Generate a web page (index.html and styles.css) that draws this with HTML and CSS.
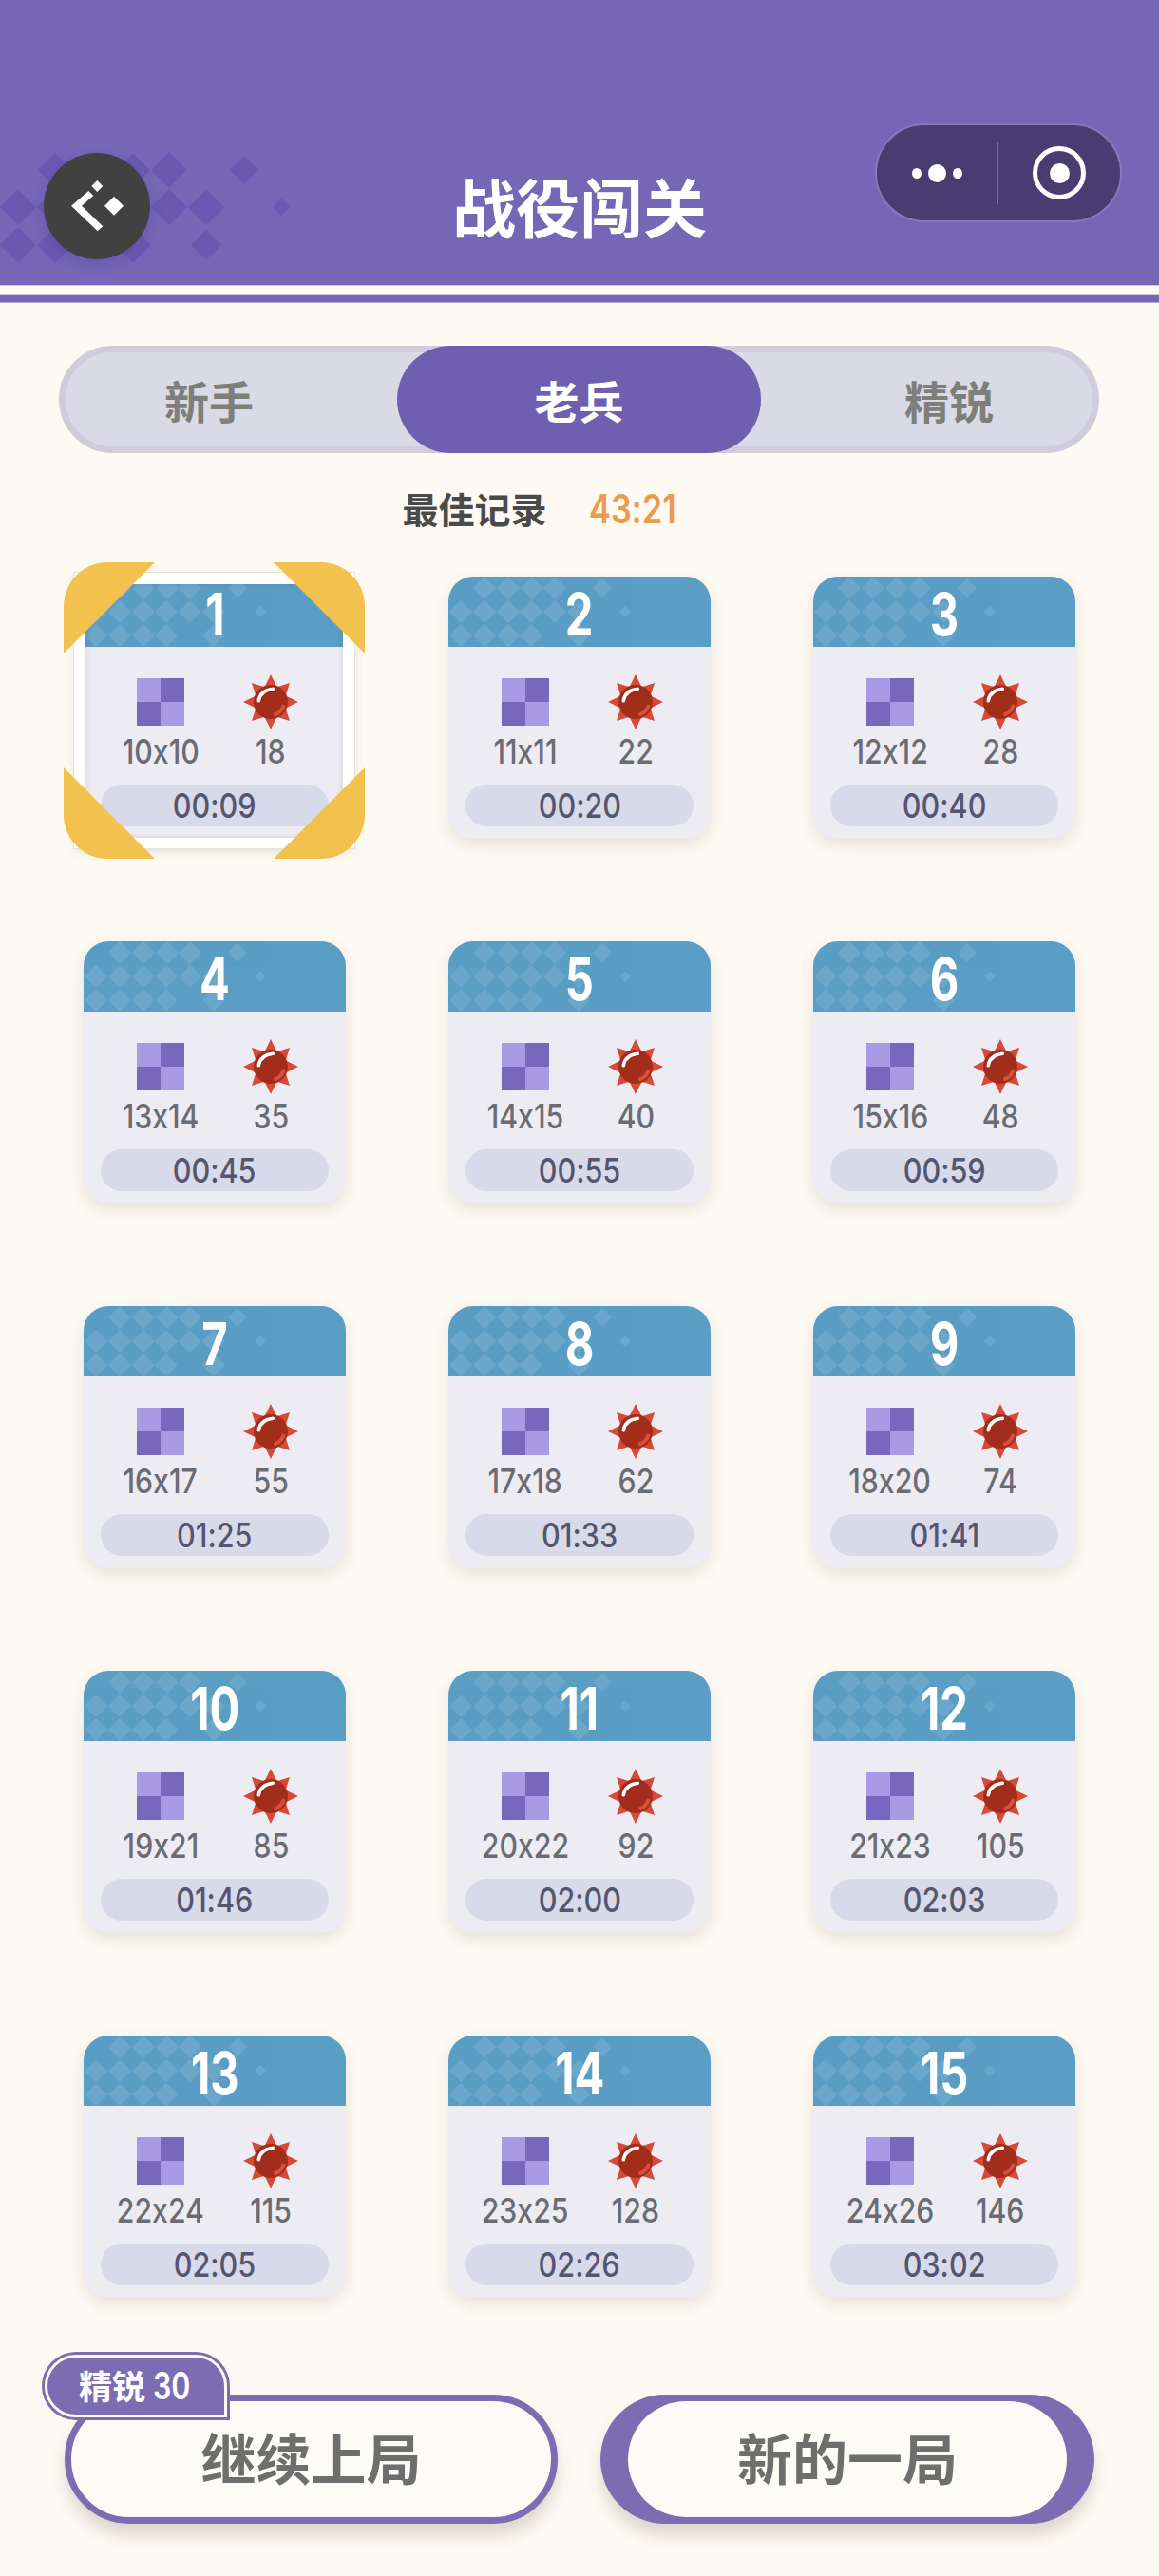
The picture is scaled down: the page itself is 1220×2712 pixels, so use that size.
FILE: index.html
```html
<!DOCTYPE html>
<html lang="zh-CN">
<head>
<meta charset="utf-8">
<title>战役闯关</title>
<link rel="stylesheet" href="styles.css">
</head>
<body>
<svg class="defs" width="0" height="0" aria-hidden="true">
  <defs>
    <symbol id="board" viewBox="0 0 50 50">
      <rect width="25" height="25" fill="#a99ae6"/><rect x="25" width="25" height="25" fill="#7767bd"/>
      <rect y="25" width="25" height="25" fill="#7767bd"/><rect x="25" y="25" width="25" height="25" fill="#a99ae6"/>
    </symbol>
    <symbol id="mine" viewBox="0 0 58 58">
      <polygon fill="#d64a38" points="29,0 35.5,13.3 49,9 44.7,22.5 58,29 44.7,35.5 49,49 35.5,44.7 29,58 22.5,44.7 9,49 13.3,35.5 0,29 13.3,22.5 9,9 22.5,13.3"/>
      <circle cx="29" cy="29" r="18" fill="#a32d1b"/>
      <path d="M16.3 27.7Q18 17 31.3 15.3" fill="none" stroke="#fff" stroke-width="3.6" stroke-linecap="round"/>
      <path d="M34 42Q39.500 40 42.300 33.700" fill="none" stroke="#d9503a" stroke-width="4" stroke-linecap="round"/>
    </symbol>
    <symbol id="deco" viewBox="0 0 276 74">
      <g fill="#fff" opacity=".1">
        <path d="M38 0l12 12-12 12-12-12zM63 0l12 12-12 12-12-12zM88 0l12 12-12 12-12-12zM112 0l12 12-12 12-12-12zM162 2l10 10-10 10-10-10z"/>
        <path d="M13 25l12 12-12 12L1 37zM38 25l12 12-12 12-12-12zM63 25l12 12-12 12-12-12zM87 25l12 12-12 12-12-12zM112 25l12 12-12 12-12-12zM137 25l12 12-12 12-12-12zM186 31l6 6-6 6-6-6z"/>
        <path d="M13 50l12 12-12 12L1 62zM38 50l12 12-12 12-12-12zM63 50l12 12-12 12-12-12zM87 50l12 12-12 12-12-12zM137 50l12 12-12 12-12-12z"/>
      </g>
    </symbol>
  </defs>
</svg>
<header class="top">
  <svg class="top-deco" viewBox="0 0 310 120" aria-hidden="true">
    <g fill="#6a59b1">
      <path d="M58 0l18 18-18 18-18-18zM140 0l18 18-18 18-18-18zM178 -1l19 19-19 19-19-19zM257 3l15 15-15 15-15-15z"/>
      <path d="M19 38l19 19-19 19L0 57zM58 38l19 19-19 19-19-19zM178 38l19 19-19 19-19-19zM217 38l19 19-19 19-19-19zM296 48l9 9-9 9-9-9z"/>
      <path d="M19 78l19 19-19 19L0 97zM58 78l19 19-19 19-19-19zM140 78l19 19-19 19-19-19zM217 81l16 16-16 16-16-16z"/>
    </g>
  </svg>
  <button class="back" aria-label="返回">
    <svg viewBox="0 0 112 112" width="112" height="112">
      <path fill="#fff" d="M29 55.700L47.300 40 52.300 45 40 55.700 62.300 77.300 56.700 82.300z"/>
      <path fill="#fff" d="M56.300 29l6 6-6 6-6-6zM74 45.700l10 10-10 10-10-10z"/>
    </svg>
  </button>
  <h1 class="top-title">战役闯关</h1>
  <div class="capsule">
    <div class="capsule-more"><i></i><b></b><i></i></div>
    <div class="capsule-rule"></div>
    <div class="capsule-close"><span></span></div>
  </div>
</header>
<div class="stripe"></div>
<main class="page">
  <nav class="tabs">
    <div class="tab tab-first">新手</div>
    <div class="tab tab-on">老兵</div>
    <div class="tab tab-last">精锐</div>
  </nav>
  <p class="best"><span class="best-label">最佳记录</span><span class="best-time">43:21</span></p>
  <section class="grid">
    <article class="card card-on">
      <div class="card-head"><svg class="card-deco"><use href="#deco"/></svg><span class="card-no">1</span></div>
      <div class="card-stats"><div class="stat stat-board"><svg class="stat-icon"><use href="#board"/></svg><span class="stat-val">10x10</span></div><div class="stat stat-mine"><svg class="stat-icon"><use href="#mine"/></svg><span class="stat-val">18</span></div></div>
      <div class="card-time"><span>00:09</span></div>
      <i class="card-frame"></i>
      <i class="corner corner-tl"></i><i class="corner corner-tr"></i><i class="corner corner-bl"></i><i class="corner corner-br"></i>
    </article>
    <article class="card">
      <div class="card-head"><svg class="card-deco"><use href="#deco"/></svg><span class="card-no">2</span></div>
      <div class="card-stats"><div class="stat stat-board"><svg class="stat-icon"><use href="#board"/></svg><span class="stat-val">11x11</span></div><div class="stat stat-mine"><svg class="stat-icon"><use href="#mine"/></svg><span class="stat-val">22</span></div></div>
      <div class="card-time"><span>00:20</span></div>
    </article>
    <article class="card">
      <div class="card-head"><svg class="card-deco"><use href="#deco"/></svg><span class="card-no">3</span></div>
      <div class="card-stats"><div class="stat stat-board"><svg class="stat-icon"><use href="#board"/></svg><span class="stat-val">12x12</span></div><div class="stat stat-mine"><svg class="stat-icon"><use href="#mine"/></svg><span class="stat-val">28</span></div></div>
      <div class="card-time"><span>00:40</span></div>
    </article>
    <article class="card">
      <div class="card-head"><svg class="card-deco"><use href="#deco"/></svg><span class="card-no">4</span></div>
      <div class="card-stats"><div class="stat stat-board"><svg class="stat-icon"><use href="#board"/></svg><span class="stat-val">13x14</span></div><div class="stat stat-mine"><svg class="stat-icon"><use href="#mine"/></svg><span class="stat-val">35</span></div></div>
      <div class="card-time"><span>00:45</span></div>
    </article>
    <article class="card">
      <div class="card-head"><svg class="card-deco"><use href="#deco"/></svg><span class="card-no">5</span></div>
      <div class="card-stats"><div class="stat stat-board"><svg class="stat-icon"><use href="#board"/></svg><span class="stat-val">14x15</span></div><div class="stat stat-mine"><svg class="stat-icon"><use href="#mine"/></svg><span class="stat-val">40</span></div></div>
      <div class="card-time"><span>00:55</span></div>
    </article>
    <article class="card">
      <div class="card-head"><svg class="card-deco"><use href="#deco"/></svg><span class="card-no">6</span></div>
      <div class="card-stats"><div class="stat stat-board"><svg class="stat-icon"><use href="#board"/></svg><span class="stat-val">15x16</span></div><div class="stat stat-mine"><svg class="stat-icon"><use href="#mine"/></svg><span class="stat-val">48</span></div></div>
      <div class="card-time"><span>00:59</span></div>
    </article>
    <article class="card">
      <div class="card-head"><svg class="card-deco"><use href="#deco"/></svg><span class="card-no">7</span></div>
      <div class="card-stats"><div class="stat stat-board"><svg class="stat-icon"><use href="#board"/></svg><span class="stat-val">16x17</span></div><div class="stat stat-mine"><svg class="stat-icon"><use href="#mine"/></svg><span class="stat-val">55</span></div></div>
      <div class="card-time"><span>01:25</span></div>
    </article>
    <article class="card">
      <div class="card-head"><svg class="card-deco"><use href="#deco"/></svg><span class="card-no">8</span></div>
      <div class="card-stats"><div class="stat stat-board"><svg class="stat-icon"><use href="#board"/></svg><span class="stat-val">17x18</span></div><div class="stat stat-mine"><svg class="stat-icon"><use href="#mine"/></svg><span class="stat-val">62</span></div></div>
      <div class="card-time"><span>01:33</span></div>
    </article>
    <article class="card">
      <div class="card-head"><svg class="card-deco"><use href="#deco"/></svg><span class="card-no">9</span></div>
      <div class="card-stats"><div class="stat stat-board"><svg class="stat-icon"><use href="#board"/></svg><span class="stat-val">18x20</span></div><div class="stat stat-mine"><svg class="stat-icon"><use href="#mine"/></svg><span class="stat-val">74</span></div></div>
      <div class="card-time"><span>01:41</span></div>
    </article>
    <article class="card">
      <div class="card-head"><svg class="card-deco"><use href="#deco"/></svg><span class="card-no">10</span></div>
      <div class="card-stats"><div class="stat stat-board"><svg class="stat-icon"><use href="#board"/></svg><span class="stat-val">19x21</span></div><div class="stat stat-mine"><svg class="stat-icon"><use href="#mine"/></svg><span class="stat-val">85</span></div></div>
      <div class="card-time"><span>01:46</span></div>
    </article>
    <article class="card">
      <div class="card-head"><svg class="card-deco"><use href="#deco"/></svg><span class="card-no">11</span></div>
      <div class="card-stats"><div class="stat stat-board"><svg class="stat-icon"><use href="#board"/></svg><span class="stat-val">20x22</span></div><div class="stat stat-mine"><svg class="stat-icon"><use href="#mine"/></svg><span class="stat-val">92</span></div></div>
      <div class="card-time"><span>02:00</span></div>
    </article>
    <article class="card">
      <div class="card-head"><svg class="card-deco"><use href="#deco"/></svg><span class="card-no">12</span></div>
      <div class="card-stats"><div class="stat stat-board"><svg class="stat-icon"><use href="#board"/></svg><span class="stat-val">21x23</span></div><div class="stat stat-mine"><svg class="stat-icon"><use href="#mine"/></svg><span class="stat-val">105</span></div></div>
      <div class="card-time"><span>02:03</span></div>
    </article>
    <article class="card">
      <div class="card-head"><svg class="card-deco"><use href="#deco"/></svg><span class="card-no">13</span></div>
      <div class="card-stats"><div class="stat stat-board"><svg class="stat-icon"><use href="#board"/></svg><span class="stat-val">22x24</span></div><div class="stat stat-mine"><svg class="stat-icon"><use href="#mine"/></svg><span class="stat-val">115</span></div></div>
      <div class="card-time"><span>02:05</span></div>
    </article>
    <article class="card">
      <div class="card-head"><svg class="card-deco"><use href="#deco"/></svg><span class="card-no">14</span></div>
      <div class="card-stats"><div class="stat stat-board"><svg class="stat-icon"><use href="#board"/></svg><span class="stat-val">23x25</span></div><div class="stat stat-mine"><svg class="stat-icon"><use href="#mine"/></svg><span class="stat-val">128</span></div></div>
      <div class="card-time"><span>02:26</span></div>
    </article>
    <article class="card">
      <div class="card-head"><svg class="card-deco"><use href="#deco"/></svg><span class="card-no">15</span></div>
      <div class="card-stats"><div class="stat stat-board"><svg class="stat-icon"><use href="#board"/></svg><span class="stat-val">24x26</span></div><div class="stat stat-mine"><svg class="stat-icon"><use href="#mine"/></svg><span class="stat-val">146</span></div></div>
      <div class="card-time"><span>03:02</span></div>
    </article>
  </section>
  <footer class="actions">
    <button class="btn btn-resume">
      <span class="flag">精锐 <span class="flag-num">30</span></span>
      继续上局
    </button>
    <button class="btn btn-new"><span class="btn-new-in">新的一局</span></button>
  </footer>
</main>
</body>
</html>
```
FILE: styles.css
```css
* { box-sizing: border-box; }
html, body { margin: 0; padding: 0; }
body {
  width: 1220px;
  height: 2712px;
  background: #fdfaf3;
  font-family: "Noto Sans CJK SC", "Inter", sans-serif;
  font-feature-settings: "calt" 0;
  overflow: hidden;
}
.defs { position: absolute; }

/* header */
.top {
  position: relative;
  height: 300px;
  background: #7566b6;
  display: flex;
  align-items: flex-end;
  justify-content: center;
}
.top-deco { position: absolute; left: 0; top: 161px; width: 310px; height: 120px; overflow: visible; }
.back {
  position: absolute; left: 46px; top: 161px;
  width: 112px; height: 112px;
  border: 0; border-radius: 50%;
  background: #414141;
  padding: 0;
  box-shadow: 0 6px 14px rgba(70, 55, 140, .25);
}
.back svg { display: block; }
.top-title {
  margin: 0 0 48px;
  color: #fff;
  font-size: 67px;
  line-height: 72px;
  font-weight: 700;
}
.capsule {
  position: absolute; left: 921px; top: 130px;
  width: 260px; height: 104px;
  border-radius: 52px;
  background: #483c70;
  border: 2px solid #8778bb;
  display: flex; align-items: center;
}
.capsule-more { width: 126px; display: flex; justify-content: center; align-items: center; gap: 7px; }
.capsule-more i { width: 10px; height: 11px; border-radius: 50%; background: #fff; }
.capsule-more b { width: 19px; height: 19px; border-radius: 50%; background: #fff; }
.capsule-rule { width: 2px; height: 66px; background: #7b6fa8; }
.capsule-close { flex: 1; display: flex; justify-content: center; }
.capsule-close span {
  width: 56px; height: 56px; border-radius: 50%;
  border: 5px solid #fff;
  display: flex; align-items: center; justify-content: center;
}
.capsule-close span::after { content: ""; width: 21px; height: 21px; border-radius: 50%; background: #fff; }
.stripe {
  height: 19px;
  background: linear-gradient(#fdfaf3 0 9px, #cfc7e3 9px 10px, #7566b6 10px);
  border-bottom: 1px solid #b5a9d4;
  border-top: 1px solid #cfc7e3;
}

/* tabs + best */
.page { padding: 45px 63px 0 62px; }
.tabs {
  display: flex;
  height: 113px;
  border-radius: 57px;
  border: 7px solid #cfcddc;
  background: #dadae7;
}
.tab {
  color: #7e7e7a;
  font-size: 47px;
  font-weight: 700;
  line-height: 99px;
  text-align: center;
}
.tab-first { flex: 0 0 349px; padding-right: 47px; }
.tab-last { flex: 0 0 349px; padding-left: 47px; }
.tab-on {
  flex: 0 0 383px;
  background: #6e5fb0;
  color: #fff;
  border-radius: 57px;
  height: 113px;
  margin-top: -7px;
  line-height: 113px;
}
.best {
  margin: 34px 0 0;
  display: flex;
  justify-content: center;
  gap: 44px;
  height: 48px;
  line-height: 48px;
  font-size: 38px;
  font-weight: 700;
  padding-right: 83px;
}
.best-label { color: #4a4a4a; }
.best-time {
  width: 93px;
  color: #ee9a4d;
  font-family: "Inter", sans-serif;
  font-weight: 600;
  font-size: 43px;
  white-space: nowrap;
  transform: scaleX(.8);
  transform-origin: left center;
}

/* level grid */
.grid {
  margin: 48px 0 0 26px;
  display: grid;
  grid-template-columns: repeat(3, 276px);
  grid-auto-rows: 276px;
  gap: 108px;
}
.card {
  position: relative;
  border-radius: 26px;
  background: #edecf3;
  box-shadow: 0 6px 16px rgba(90, 80, 60, .14);
}
.card-head {
  position: relative;
  height: 74px;
  border-radius: 26px 26px 0 0;
  background: #5a9dc5;
  display: flex; justify-content: center; align-items: center;
}
.card-deco {
  position: absolute; left: 0; top: 0;
  width: 276px; height: 74px;
  border-radius: 26px 26px 0 0;
  overflow: hidden;
}
.card-no {
  position: relative;
  color: #fff;
  font-family: "Inter", sans-serif;
  font-weight: 700;
  font-size: 62px;
  line-height: 68px;
  padding-top: 6px;
  transform: scaleX(.76);
}
.card-stats { display: flex; margin-top: 33px; height: 112px; }
.stat { display: flex; flex-direction: column; align-items: center; }
.stat-board { width: 162px; }
.stat-mine { width: 70px; }
.stat-icon { display: block; width: 50px; height: 50px; }
.stat-mine .stat-icon { width: 58px; height: 58px; margin-top: -4px; }
.stat-val {
  margin-top: 7px;
  color: #6b6b73;
  font-family: "Inter", sans-serif;
  font-weight: 500;
  font-size: 36px;
  line-height: 40px;
  transform: scaleX(.84);
  white-space: nowrap;
}
.stat-mine .stat-val { margin-top: 3px; }
.card-time {
  margin: 0 18px;
  height: 44px;
  border-radius: 22px;
  background: #d8daea;
  color: #55556f;
  font-family: "Inter", sans-serif;
  font-weight: 500;
  font-size: 36px;
  line-height: 44px;
  text-align: center;
}
.card-time span { display: inline-block; transform: scaleX(.85); }

/* selected level */
.card-on { border-radius: 0; }
.card-on .card-head { border-radius: 0; }
.card-frame {
  position: absolute;
  left: -10px; right: -9px; top: -4px; bottom: -10px;
  border-style: solid;
  border-color: #fff;
  border-width: 12px 12px 11px 12px;
  box-shadow: 0 0 0 1px #e6e3dc, inset 0 0 6px rgba(90, 80, 60, .18), 0 4px 10px rgba(90, 80, 60, .1);
}
.corner { position: absolute; width: 96px; height: 96px; background: #f2c14e; }
.corner-tl { left: -21px; top: -15px; border-radius: 46px 0 0 0; clip-path: polygon(0 0, 100% 0, 0 100%); }
.corner-tr { right: -20px; top: -15px; border-radius: 0 46px 0 0; clip-path: polygon(0 0, 100% 0, 100% 100%); }
.corner-bl { left: -21px; bottom: -21px; border-radius: 0 0 0 46px; clip-path: polygon(0 0, 100% 100%, 0 100%); }
.corner-br { right: -20px; bottom: -21px; border-radius: 0 0 46px 0; clip-path: polygon(100% 0, 100% 100%, 0 100%); }

/* bottom actions */
.actions {
  position: absolute;
  left: 68px; top: 2521px;
  display: flex;
  gap: 45px;
}
.btn {
  position: relative;
  height: 136px;
  border-radius: 68px;
  font-family: "Noto Sans CJK SC", sans-serif;
  font-weight: 700;
  font-size: 58px;
  color: #6e6e6e;
  background: #fcfbf5;
  box-shadow: 0 12px 16px rgba(90, 80, 60, .2);
  padding: 0;
}
.btn-resume { width: 519px; border: 7px solid #7a6db2; padding-bottom: 6px; }
.btn-new {
  width: 520px; border: 0; background: #7a6db2;
  padding: 7px 29px;
}
.btn-new-in {
  display: block; height: 122px; line-height: 116px;
  background: #fcfbf5;
  border-radius: 61px;
}
.flag {
  position: absolute;
  left: -28px; top: -49px;
  width: 192px; height: 66px;
  border-radius: 33px 33px 0 33px;
  background: #7a6db2;
  border: 3px solid #fcfbf5;
  box-shadow: 0 0 0 3px #7a6db2;
  color: #fff;
  font-size: 35px;
  line-height: 58px;
  text-align: center;
  white-space: nowrap;
}
.flag-num {
  display: inline-block;
  font-family: "Inter", sans-serif;
  font-size: 40px;
  line-height: 50px;
  font-weight: 600;
  transform: scaleX(.76);
  transform-origin: left center;
  width: 42px;
  text-align: left;
}
```
